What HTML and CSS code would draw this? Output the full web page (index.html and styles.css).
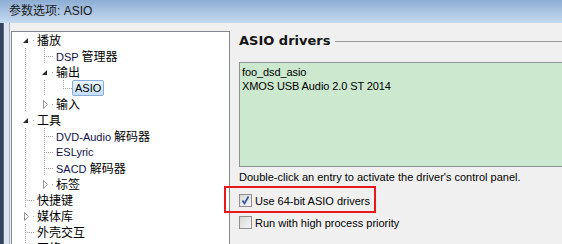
FILE: index.html
```html
<!DOCTYPE html>
<html lang="zh-CN">
<head>
  <meta charset="UTF-8">
  <title>参数选项: ASIO</title>
  <link rel="stylesheet" href="styles.css">
</head>
<body>
  <div class="titlebar">参数选项: ASIO</div>

  <div class="window">
    <div class="edge"></div>

    <!-- preferences tree -->
    <div class="tree">
      <div class="row">
        <span class="conn first"><svg class="twisty" width="10" height="16"><rect width="10" height="16" fill="#fff"/><polygon points="6,6 6,11 1,11" fill="#262626"/></svg></span>
        <span class="label zh">播放</span>
      </div>
      <div class="row">
        <span class="guide v"></span><span class="conn"></span>
        <span class="label"><span class="en">DSP</span> <span class="zh">管理器</span></span>
      </div>
      <div class="row">
        <span class="guide v"></span>
        <span class="conn"><svg class="twisty" width="10" height="16"><rect width="10" height="16" fill="#fff"/><polygon points="6,6 6,11 1,11" fill="#262626"/></svg></span>
        <span class="label zh">输出</span>
      </div>
      <div class="row">
        <span class="guide v"></span><span class="guide v"></span><span class="conn last"></span>
        <span class="label selected"><span class="en">ASIO</span></span>
      </div>
      <div class="row">
        <span class="guide v"></span>
        <span class="conn last"><svg class="twisty" width="10" height="16"><rect width="10" height="16" fill="#fff"/><polygon points="2.5,4.5 6.5,8.5 2.5,12.5" fill="#fff" stroke="#979797"/></svg></span>
        <span class="label zh">输入</span>
      </div>
      <div class="row">
        <span class="conn"><svg class="twisty" width="10" height="16"><rect width="10" height="16" fill="#fff"/><polygon points="6,6 6,11 1,11" fill="#262626"/></svg></span>
        <span class="label zh">工具</span>
      </div>
      <div class="row">
        <span class="guide v"></span><span class="conn"></span>
        <span class="label"><span class="en">DVD-Audio</span> <span class="zh">解码器</span></span>
      </div>
      <div class="row">
        <span class="guide v"></span><span class="conn"></span>
        <span class="label"><span class="en">ESLyric</span></span>
      </div>
      <div class="row">
        <span class="guide v"></span><span class="conn"></span>
        <span class="label"><span class="en">SACD</span> <span class="zh">解码器</span></span>
      </div>
      <div class="row">
        <span class="guide v"></span>
        <span class="conn last"><svg class="twisty" width="10" height="16"><rect width="10" height="16" fill="#fff"/><polygon points="2.5,4.5 6.5,8.5 2.5,12.5" fill="#fff" stroke="#979797"/></svg></span>
        <span class="label zh">标签</span>
      </div>
      <div class="row">
        <span class="conn"></span>
        <span class="label zh">快捷键</span>
      </div>
      <div class="row">
        <span class="conn"><svg class="twisty" width="10" height="16"><rect width="10" height="16" fill="#fff"/><polygon points="2.5,4.5 6.5,8.5 2.5,12.5" fill="#fff" stroke="#979797"/></svg></span>
        <span class="label zh">媒体库</span>
      </div>
      <div class="row">
        <span class="conn"></span>
        <span class="label zh">外壳交互</span>
      </div>
      <div class="row">
        <span class="conn"></span>
        <span class="label zh">网络</span>
      </div>
    </div>

    <!-- ASIO page -->
    <div class="panel">
      <div class="group-title">
        <span class="heading">ASIO drivers</span>
        <span class="rule"></span>
      </div>
      <div class="listbox">
        <div class="item">foo_dsd_asio</div>
        <div class="item">XMOS USB Audio 2.0 ST 2014</div>
      </div>
      <p class="hint">Double-click an entry to activate the driver's control panel.</p>
      <label class="check first">
        <span class="box"><svg width="11" height="11"><path d="M2.5 5.5 L4.5 8.5 L8.5 1.5" fill="none" stroke="#2b55a0" stroke-width="1.6"/></svg></span>
        Use 64-bit ASIO drivers
      </label>
      <label class="check">
        <span class="box"></span>
        Run with high process priority
      </label>
    </div>
  </div>

  <div class="highlight"></div>
</body>
</html>
```

FILE: styles.css
```css
html {
  overflow: hidden;
}
body {
  margin: 0;
  width: 562px;
  height: 244px;
  overflow: hidden;
  position: relative;
  background: #f0f0f0;
  font-family: "Liberation Sans", "Noto Sans CJK SC", sans-serif;
  font-size: 11px;
  color: #000;
}

.titlebar {
  height: 23px;
  line-height: 23px;
  padding-left: 9px;
  font-size: 12px;
  color: #1a1a1a;
  background: linear-gradient(#8dadd4, #c6daf0);
}

.window {
  display: flex;
  align-items: flex-start;
  width: 640px;
  height: 221px;
  padding-top: 8px;
  box-sizing: border-box;
}

.edge {
  flex: none;
  align-self: stretch;
  margin-top: -8px;
  width: 10px;
  background: linear-gradient(to right, #34465f 0 3px, #5d6b7c 3px 4px, #dce6f2 4px 9px, #aab4c1 9px 10px);
}

/* tree */
.tree {
  flex: none;
  width: 217px;
  height: 240px;
  margin-left: 1px;
  border: 1px solid #828790;
  background: #fff;
  --dot: #a0a0a0;
}
.row {
  display: flex;
  height: 16px;
}
.guide, .conn {
  flex: none;
  background-repeat: no-repeat;
}
.guide {
  width: 19px;
}
.guide.v {
  background-image: repeating-linear-gradient(var(--dot) 0 1px, transparent 1px 2px);
  background-position: 13px 0;
  background-size: 1px 16px;
}
.conn {
  width: 25px;
  background-image:
    repeating-linear-gradient(90deg, var(--dot) 0 1px, transparent 1px 2px),
    repeating-linear-gradient(var(--dot) 0 1px, transparent 1px 2px);
  background-position: 13px 8px, 13px 0;
  background-size: 10px 1px, 1px 16px;
}
.conn.last {
  background-size: 10px 1px, 1px 9px;
}
.conn.first {
  background-position: 13px 8px, 13px 8px;
  background-size: 10px 1px, 1px 8px;
}
.twisty {
  display: block;
  margin-left: 10px;
}
.label {
  line-height: 16px;
  white-space: nowrap;
}
.zh {
  font-family: "Noto Sans CJK SC", sans-serif;
  font-size: 12px;
}
.en {
  color: #101048;
}
.label.selected {
  margin-left: -3px;
  padding: 0 2px;
  height: 14px;
  line-height: 14px;
  border: 1px solid #84acdd;
  border-radius: 2px;
  background: linear-gradient(#eaf3fd, #c7defa);
}
.label.selected .en {
  color: #000;
}

/* right page */
.panel {
  flex: none;
  width: 380px;
  margin-left: 9px;
}
.group-title {
  display: flex;
  align-items: center;
  height: 16px;
  margin-top: 1px;
}
.heading {
  font-family: "DejaVu Sans", sans-serif;
  font-weight: bold;
  font-size: 13px;
  color: #151515;
}
.rule {
  flex: 1;
  height: 0;
  margin: 2px 0 0 5px;
  border-top: 1px solid #9a9a9a;
}
.listbox {
  height: 105px;
  margin-top: 14px;
  padding: 2px 0 0 2px;
  box-sizing: border-box;
  border: 1px solid #8e9195;
  border-right: 0;
  background: #cce8cf;
}
.item {
  line-height: 14px;
  letter-spacing: -0.1px;
}
.hint {
  margin: 3px 0 0;
  line-height: 14px;
}
.check {
  display: flex;
  align-items: center;
  gap: 3px;
  height: 13px;
}
.check.first {
  margin-top: 10px;
  margin-bottom: 9px;
}
.box {
  width: 11px;
  height: 11px;
  border: 1px solid #8f8f8f;
  background: linear-gradient(135deg, #d8d8d8, #f6f6f6);
}
.box svg {
  display: block;
}

/* annotation */
.highlight {
  position: absolute;
  left: 224px;
  top: 186px;
  width: 148px;
  height: 23px;
  border: 2px solid #e8191c;
}
```
